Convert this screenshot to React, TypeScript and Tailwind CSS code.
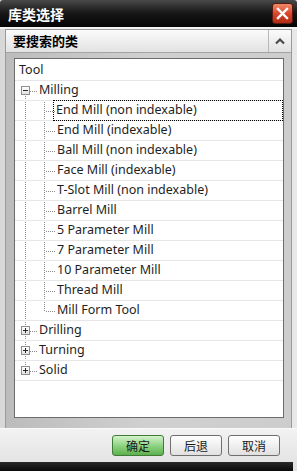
import React from "react";

type Row = { text: string; level: 0 | 1 | 2; exp?: "minus" | "plus"; selected?: boolean };

const rows: Row[] = [
  { text: "Tool", level: 0 },
  { text: "Milling", level: 1, exp: "minus" },
  { text: "End Mill (non indexable)", level: 2, selected: true },
  { text: "End Mill (indexable)", level: 2 },
  { text: "Ball Mill (non indexable)", level: 2 },
  { text: "Face Mill (indexable)", level: 2 },
  { text: "T-Slot Mill (non indexable)", level: 2 },
  { text: "Barrel Mill", level: 2 },
  { text: "5 Parameter Mill", level: 2 },
  { text: "7 Parameter Mill", level: 2 },
  { text: "10 Parameter Mill", level: 2 },
  { text: "Thread Mill", level: 2 },
  { text: "Mill Form Tool", level: 2 },
  { text: "Drilling", level: 1, exp: "plus" },
  { text: "Turning", level: 1, exp: "plus" },
  { text: "Solid", level: 1, exp: "plus" },
];

const cjk = { fontFamily: '"Noto Sans CJK SC", "Noto Sans", sans-serif' };
const latin = { fontFamily: '"Noto Sans", "DejaVu Sans", sans-serif' };

function Expander({ kind }: { kind: "minus" | "plus" }) {
  return (
    <div className="relative w-[9px] h-[9px] border border-[#8f8f8f] bg-gradient-to-b from-white to-[#e2e2e2] flex items-center justify-center shrink-0">
      <div className="w-[5px] h-px bg-[#2a2a2a]" />
      {kind === "plus" && <div className="absolute w-px h-[5px] bg-[#2a2a2a]" />}
    </div>
  );
}

function TreeLines() {
  const cy = (i: number) => 12.5 + 20 * i;
  const hLines: React.ReactNode[] = [];
  rows.forEach((r, i) => {
    if (r.level === 1) {
      hLines.push(<line key={"h" + i} x1={15} x2={22} y1={cy(i)} y2={cy(i)} />);
    } else if (r.level === 2) {
      hLines.push(<line key={"h" + i} x1={31} x2={41} y1={cy(i)} y2={cy(i)} />);
    }
  });
  return (
    <svg className="absolute inset-0 pointer-events-none" width="266" height="357">
      <g stroke="#8a8a8a" strokeWidth="1" strokeDasharray="1 1" shapeRendering="crispEdges">
        <line x1={10.5} x2={10.5} y1={37} y2={308} />
        <line x1={29.5} x2={29.5} y1={43} y2={cy(12)} />
        {hLines}
      </g>
    </svg>
  );
}

function TreeRow({ r }: { r: Row }) {
  return (
    <div className="h-[20px] border-b border-[#e6e6e6] flex items-center text-[12.5px] text-[#1e1e1e] whitespace-nowrap">
      {r.level === 0 && <span className="pl-[4px]">{r.text}</span>}
      {r.level === 1 && (
        <>
          <div className="w-[6px] shrink-0" />
          <Expander kind={r.exp!} />
          <span className="pl-[9px]">{r.text}</span>
        </>
      )}
      {r.level === 2 && (
        <>
          <div className="w-[39px] shrink-0" />
          <div
            className={
              "flex-1 h-[21px] flex items-center pl-[2px] " +
              (r.selected ? "border border-dotted border-black pl-[2px] -ml-px" : "")
            }
          >
            <span className={r.selected ? "" : "pl-px"}>{r.text}</span>
          </div>
        </>
      )}
    </div>
  );
}

export default function App() {
  return (
    <div className="w-[297px] h-[471px] flex flex-col bg-[#e2e2e2] overflow-hidden" style={latin}>
      {/* Title bar */}
      <div className="h-[27px] shrink-0 flex items-center justify-between pl-[8px] pr-[4px] bg-gradient-to-b from-[#4a4a4a] via-[#161616] to-[#050505] rounded-t-[3px]">
        <span className="text-white font-bold text-[14px] leading-none" style={cjk}>
          库类选择
        </span>
        <div className="w-[21px] h-[21px] rounded-[3px] border border-[#5a1a10] bg-gradient-to-b from-[#f08a6a] via-[#d9472a] to-[#b02a12] flex items-center justify-center">
          <svg width="13" height="13" viewBox="0 0 13 13">
            <path d="M2 2 L11 11 M11 2 L2 11" stroke="white" strokeWidth="2.4" strokeLinecap="square" />
          </svg>
        </div>
      </div>

      {/* Body */}
      <div className="flex-1 flex flex-col bg-gradient-to-r from-[#d8d8d8] to-[#e8e8e8]">
        <div className="h-[2px] bg-[#f2f2f2]" />
        <div className="flex-1 flex px-[5px]">
          <div className="flex-1 flex flex-col border border-[#9a9a9a] border-b-0">
            {/* Section header */}
            <div className="h-[23px] shrink-0 flex border-b border-[#a4a4a4] bg-gradient-to-b from-[#fbfbfb] to-[#e2e2e2]">
              <div className="flex-1 flex items-center pl-[7px] text-[13px] font-bold text-black" style={cjk}>
                要搜索的类
              </div>
              <div className="w-[23px] border-l border-[#b8b8b8] flex items-center justify-center">
                <svg width="10" height="8" viewBox="0 0 10 8">
                  <path d="M1 6.5 L5 2.5 L9 6.5" fill="none" stroke="#4a4a4a" strokeWidth="2.2" />
                </svg>
              </div>
            </div>
            {/* Gray area with tree */}
            <div className="flex-1 flex flex-col pl-[8px] pr-[7px] pt-[5px] pb-[10px] bg-gradient-to-r from-[#bcbcbc] via-[#d0d0d0] to-[#cdcdcd]">
              <div className="relative flex-1 border border-[#6c6c6c] bg-white pt-[2px]">
                <TreeLines />
                <div className="relative flex flex-col">
                  {rows.map((r, i) => (
                    <TreeRow key={i} r={r} />
                  ))}
                </div>
              </div>
            </div>
          </div>
        </div>
        {/* Footer */}
        <div className="h-[34px] shrink-0 border-t border-[#fafafa] bg-gradient-to-b from-[#f2f2f2] to-[#e4e4e4] flex items-center justify-end gap-[6px] pr-[17px]">
          <button
            className="w-[52px] h-[21px] rounded-[3px] border border-[#3f7a36] bg-gradient-to-b from-[#d4f2cc] via-[#8fd484] to-[#5cb04c] text-[12px] text-[#1a1a1a] flex items-center justify-center"
            style={cjk}
          >
            确定
          </button>
          <button
            className="w-[52px] h-[21px] rounded-[3px] border border-[#6e6e6e] bg-gradient-to-b from-white to-[#e0e0e0] text-[12px] text-[#1a1a1a] flex items-center justify-center"
            style={cjk}
          >
            后退
          </button>
          <button
            className="w-[52px] h-[21px] rounded-[3px] border border-[#6e6e6e] bg-gradient-to-b from-white to-[#e0e0e0] text-[12px] text-[#1a1a1a] flex items-center justify-center"
            style={cjk}
          >
            取消
          </button>
        </div>
      </div>
      {/* Bottom bar */}
      <div className="h-[9px] shrink-0 bg-gradient-to-b from-[#2a2a2a] to-[#0a0a0a] mr-[4px]" />
    </div>
  );
}
